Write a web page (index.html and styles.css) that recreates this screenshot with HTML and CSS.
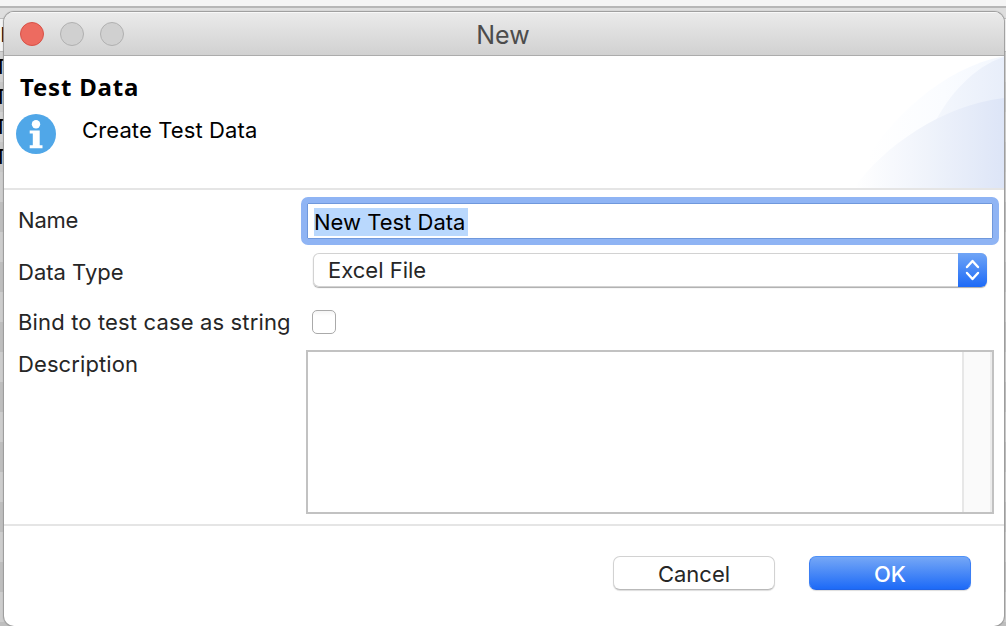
FILE: index.html
```html
<!DOCTYPE html>
<html lang="en">
<head>
<meta charset="utf-8">
<title>New</title>
<link rel="stylesheet" href="styles.css">
</head>
<body>
<div class="desktop">
  <div class="backdrop" aria-hidden="true">
    <div class="backdrop-toolbar"></div>
    <div class="backdrop-tab"></div>
    <div class="backdrop-head">I</div>
    <div class="backdrop-row">T</div>
    <div class="backdrop-row">T</div>
    <div class="backdrop-row">T</div>
    <div class="backdrop-row">T</div>
    <div class="backdrop-rest"></div>
  </div>
  <main class="window">
    <header class="titlebar">
      <div class="lights"><span class="light light-close"></span><span class="light"></span><span class="light"></span></div>
      <div class="window-title">New</div>
      <div></div>
    </header>
    <section class="banner">
      <div class="banner-text">
        <h1 class="heading">Test Data</h1>
        <div class="message">
          <svg class="info" width="40" height="40" viewBox="0 0 40 40"><circle cx="20" cy="20" r="20" fill="#50a7e8"/><circle cx="20" cy="10.200" r="4.200" fill="#fff"/><path d="M13.700 16.500h10v14.700h2.800v3H13.700v-3h3.100V19.500h-3.100z" fill="#fff"/></svg>
          <span class="message-text">Create Test Data</span>
        </div>
      </div>
      <svg class="swoosh" width="150" height="132" viewBox="0 0 150 132">
        <defs>
          <linearGradient id="g1"><stop offset="0.1" stop-color="#fff"/><stop offset="0.6" stop-color="#fafcff"/><stop offset="1" stop-color="#f3f7fe"/></linearGradient>
          <linearGradient id="g2"><stop offset="0" stop-color="#f5f8fd"/><stop offset="1" stop-color="#e8eefa"/></linearGradient>
          <linearGradient id="g3"><stop offset="0" stop-color="#fff"/><stop offset="0.5" stop-color="#eff3fb"/><stop offset="1" stop-color="#dde5f7"/></linearGradient>
        </defs>
        <path d="M8 110C35 64 88 12 150 0V132H0z" fill="url(#g1)"/>
        <path d="M80 68C94 40 120 10 150 1V80H76z" fill="url(#g2)"/>
        <path d="M0 132C29 91 88 49 150 42V132z" fill="url(#g3)"/>
      </svg>
    </section>
    <section class="form">
      <label class="label label-name">Name</label>
      <div class="field"><span class="selection">New Test Data</span></div>
      <label class="label label-type">Data Type</label>
      <div class="select"><span class="select-value">Excel File</span>
        <span class="stepper"><svg width="29" height="34" viewBox="0 0 29 34" fill="none" stroke="#fff" stroke-width="2.400" stroke-linecap="round" stroke-linejoin="round"><path d="M9 14l5.500-6 5.500 6M9 20l5.500 6 5.500-6"/></svg></span>
      </div>
      <label class="label label-bind">Bind to test case as string</label>
      <span class="checkbox"></span>
      <label class="label label-desc">Description</label>
      <div class="textarea"><span class="scroll-track"></span></div>
    </section>
    <footer class="footer">
      <button class="button">Cancel</button>
      <button class="button button-primary">OK</button>
    </footer>
  </main>
</div>
</body>
</html>
```
FILE: styles.css
```css
* { box-sizing: border-box; }
body { margin: 0; overflow: hidden; font-family: Inter, "Liberation Sans", sans-serif; font-size: 22px; line-height: 28px; color: #262626; }
.desktop { position: relative; width: 1006px; height: 626px; padding: 12px 2px 0 4px; background: #c6c6c6; overflow: hidden; }
.backdrop { position: absolute; inset: 0; font-family: "Liberation Sans", sans-serif; color: #000; }
.backdrop-toolbar { height: 8px; background: #f5f5f5; border-bottom: 2px solid #b7b7b7; }
.backdrop-tab { height: 11px; background: #dedede; border-bottom: 1px solid #bdbdbd; }
.backdrop-head { height: 33px; background: #f3f3f3; border-bottom: 1px solid #b9b9b9; line-height: 31px; }
.backdrop-row { height: 30px; line-height: 30px; background: #d1d1d1; text-indent: -6px; }
.backdrop-row:nth-child(odd) { background: #c7c7c7; }
.backdrop-rest { height: 454px; background: repeating-linear-gradient(#cdcdcd 0 30px, #bebebe 30px 60px); }
.window { position: relative; height: 614px; display: flex; flex-direction: column; border-radius: 10px; background: #fff; overflow: hidden; box-shadow: 0 0 1px 1px #999; }
.titlebar { flex: none; height: 44px; display: grid; grid-template-columns: 120px 1fr 120px; align-items: center; padding: 1px 2px 0 16px; background: linear-gradient(#ebebeb, #d1d1d1); border-bottom: 1px solid #acacac; box-shadow: inset 0 1px #f8f8f8; }
.lights { display: flex; gap: 16px; }
.light { width: 24px; height: 24px; border-radius: 50%; background: #d0d0d0; border: 1px solid #b0b0b0; }
.light-close { background: #ed6b60; border-color: #d75147; }
.window-title { text-align: center; font-size: 25px; color: #4c4c4c; padding: 1px 16px 0 0; }
.banner { flex: none; height: 134px; display: flex; justify-content: space-between; border-bottom: 2px solid #e5e5e5; overflow: hidden; }
.banner-text { padding: 16px 0 0 12px; }
.heading { margin: 0 0 0 4px; font: 700 24px/30px "Noto Sans", sans-serif; letter-spacing: 0.8px; color: #000; }
.message { display: flex; gap: 26px; margin-top: 12px; color: #000; }
.message-text { padding-top: 2px; letter-spacing: 0.12px; }
.form { flex: none; height: 336px; padding: 7px 5px 0 14px; display: grid; grid-template-columns: 283px 1fr; grid-template-rows: 49px 64px 40px 174px; align-items: start; border-bottom: 2px solid #e5e5e5; }
.label { white-space: nowrap; }
.label-name { padding-top: 9px; letter-spacing: -0.2px; }
.label-type { padding-top: 12px; }
.label-bind { margin-top: -2px; letter-spacing: 0.15px; }
.label-desc { letter-spacing: 0.1px; }
.field { height: 48px; border: 6px solid #8fb4f4; border-radius: 7px; display: flex; align-items: center; padding: 2px 0 0 7px; color: #000; background: #fff; box-shadow: inset 0 0 0 1px #6f98dc; }
.selection { background: #b9d8fd; height: 28px; width: 154px; white-space: nowrap; }
.select { height: 34px; margin: 7px 12px 0 12px; display: flex; justify-content: space-between; align-items: center; border-radius: 6px; background: #fff; box-shadow: inset 0 0 0 1px #d2d2d2, 0 1px 1px #aaa; overflow: hidden; }
.select-value { padding-left: 15px; }
.stepper { width: 29px; height: 34px; background: linear-gradient(#70a5f6, #1d6af7); }
.checkbox { width: 24px; height: 24px; margin: 0 0 0 11px; border: 1px solid #aaa; border-radius: 5px; background: linear-gradient(#f5f5f5, #fff 5px); }
.textarea { height: 164px; margin: 0 5px; display: flex; justify-content: flex-end; border: 2px solid #c2c2c2; background: #fff; }
.scroll-track { width: 30px; background: #fafafa; border-left: 2px solid #e7e7e7; border-right: 2px solid #ececec; }
.footer { display: flex; justify-content: flex-end; gap: 34px; padding: 30px 33px 0 0; }
.button { width: 162px; height: 34px; padding: 1px 0 0; font: inherit; line-height: 33px; color: #262626; border: 1px solid #d2d2d2; border-bottom-color: #b9b9b9; border-radius: 7px; background: #fff; box-shadow: 0 1px 1px #ddd; }
.button-primary { color: #fff; font-weight: 500; border-color: #4f91f7 #3b7ef4 #2163e5; background: linear-gradient(#75a7f6, #1d6af7); }
```
